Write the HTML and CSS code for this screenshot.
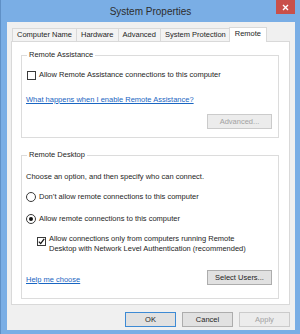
FILE: index.html
```html
<!DOCTYPE html>
<html lang="en">
  <head>
    <meta charset="UTF-8" />
    <title>System Properties</title>
    <link rel="stylesheet" href="styles.css">
  </head>
  <body>
    <div class="window">
      <div class="titlebar">
        <span></span>
        <span class="title">System Properties</span>
        <span class="close">
          <svg width="7" height="7" viewBox="0 0 7 7">
            <path d="M1 1 L6 6 M6 1 L1 6" stroke="#fff" stroke-width="1.4" />
          </svg>
        </span>
      </div>

      <div class="client">
        <div class="tabs">
          <span class="tab">Computer Name</span>
          <span class="tab">Hardware</span>
          <span class="tab">Advanced</span>
          <span class="tab">System Protection</span>
          <span class="tab active">Remote</span>
        </div>

        <div class="panel">
          <fieldset class="group assist">
            <legend>Remote Assistance</legend>
            <label class="check">
              <span class="box"></span>
              Allow Remote Assistance connections to this computer
            </label>
            <a href="#" class="link help-ra">What happens when I enable Remote Assistance?</a>
            <div class="row">
              <button class="btn wide" disabled>Advanced...</button>
            </div>
          </fieldset>

          <fieldset class="group desktop">
            <legend>Remote Desktop</legend>
            <p class="intro">Choose an option, and then specify who can connect.</p>
            <label class="radio first">
              <span class="dot"></span>
              Don’t allow remote connections to this computer
            </label>
            <label class="radio second on">
              <span class="dot"></span>
              Allow remote connections to this computer
            </label>
            <label class="check nla">
              <span class="box checked">
                <svg width="7" height="7" viewBox="0 0 7 7">
                  <path d="M0.8 3.6 L2.7 5.6 L6.2 0.9" fill="none" stroke="#111" stroke-width="1.3" />
                </svg>
              </span>
              <span>Allow connections only from computers running Remote<br />Desktop with Network Level Authentication (recommended)</span>
            </label>
            <div class="row split">
              <a href="#" class="link">Help me choose</a>
              <button class="btn wide">Select Users...</button>
            </div>
          </fieldset>
        </div>

        <div class="actions">
          <button class="btn default">OK</button>
          <button class="btn">Cancel</button>
          <button class="btn" disabled>Apply</button>
        </div>
      </div>
    </div>
  </body>
</html>
```

FILE: styles.css
```css
* {
  box-sizing: border-box;
}
body {
  margin: 0;
  background: #ffffff;
  font-family: "Liberation Sans", Arial, sans-serif;
  font-size: 7.5px;
  color: #1e1e1e;
}
.window {
  width: 300px;
  height: 334px;
  background: #7aaee5;
  border-left: 1px solid #5f90c6;
}
.titlebar {
  height: 22px;
  display: grid;
  grid-template-columns: 1fr auto 1fr;
}
.title {
  margin-top: 6px;
  font-size: 10px;
  line-height: 12px;
  color: #2d2d2d;
}
.close {
  justify-self: end;
  width: 19px;
  height: 14px;
  margin-right: 5px;
  background: #c9504a;
  display: flex;
  align-items: center;
  justify-content: center;
}

.client {
  margin: 0 5px 0 6px;
  height: 308px;
  background: #f0f0f0;
  padding: 5px 5px 0 4px;
}

.tabs {
  display: flex;
  align-items: flex-end;
  height: 14px;
  padding-left: 1px;
}
.tab {
  height: 13px;
  line-height: 12px;
  padding: 0 4px;
  border: 1px solid #d9d9d9;
  border-bottom: none;
  margin-right: -1px;
  background: #f3f3f3;
  white-space: nowrap;
}
.tab.active {
  height: 15px;
  line-height: 11px;
  margin: 0 0 -1px -1px;
  padding: 0 5px;
  background: #ffffff;
  position: relative;
  z-index: 1;
}

.panel {
  height: 264px;
  background: #ffffff;
  border: 1px solid #d9d9d9;
  padding: 8px 0 0 9px;
}

.group {
  width: 258px;
  min-width: 0;
  margin: 0;
  padding: 0 6px 0 4px;
  border: 1px solid #dcdcdc;
}
.group legend {
  padding: 0 2px;
  margin-left: 1px;
  line-height: 10px;
}
.assist {
  padding-bottom: 8px;
}
.desktop {
  margin-top: 12px;
  padding-bottom: 13px;
}

.check,
.radio {
  display: flex;
  align-items: center;
  line-height: 10px;
  white-space: nowrap;
}
.assist .check {
  margin-top: 10px;
}
.box {
  width: 9px;
  height: 9px;
  margin: 0 3px 0 1px;
  border: 1px solid #3a3a3a;
  background: #ffffff;
  display: flex;
  align-items: center;
  justify-content: center;
}
.dot {
  width: 10px;
  height: 10px;
  margin-right: 3px;
  border: 1px solid #3a3a3a;
  border-radius: 50%;
  background: #ffffff;
  display: flex;
  align-items: center;
  justify-content: center;
}
.radio.on .dot::after {
  content: "";
  width: 4px;
  height: 4px;
  border-radius: 50%;
  background: #111111;
}

.link {
  display: block;
  width: fit-content;
  line-height: 10px;
  color: #1a66c2;
  text-decoration: underline;
}
.help-ra {
  margin-top: 15px;
}
.row {
  display: flex;
  justify-content: flex-end;
  margin-top: 9px;
}
.row.split {
  justify-content: space-between;
  align-items: flex-end;
  margin-top: 16px;
}

.intro {
  margin: 12px 0 0;
  line-height: 10px;
}
.radio.first {
  margin-top: 10px;
}
.radio.second {
  margin-top: 12px;
}
.check.nla {
  margin: 10px 0 0 11px;
  align-items: flex-start;
}
.check.nla .box {
  margin-top: 3px;
  margin-left: 0;
}

.btn {
  width: 51px;
  height: 15px;
  padding: 0;
  border: 1px solid #adadad;
  background: #e1e1e1;
  font-family: inherit;
  font-size: 7.5px;
  color: #1e1e1e;
}
.btn.wide {
  width: 65px;
}
.btn.default {
  border-color: #3d8ad4;
}
.btn:disabled {
  border-color: #cbcbcb;
  background: #ececec;
  color: #a2a2a2;
}

.actions {
  display: flex;
  justify-content: flex-end;
  gap: 6px;
  margin-top: 7px;
  padding-right: 0;
}
```
